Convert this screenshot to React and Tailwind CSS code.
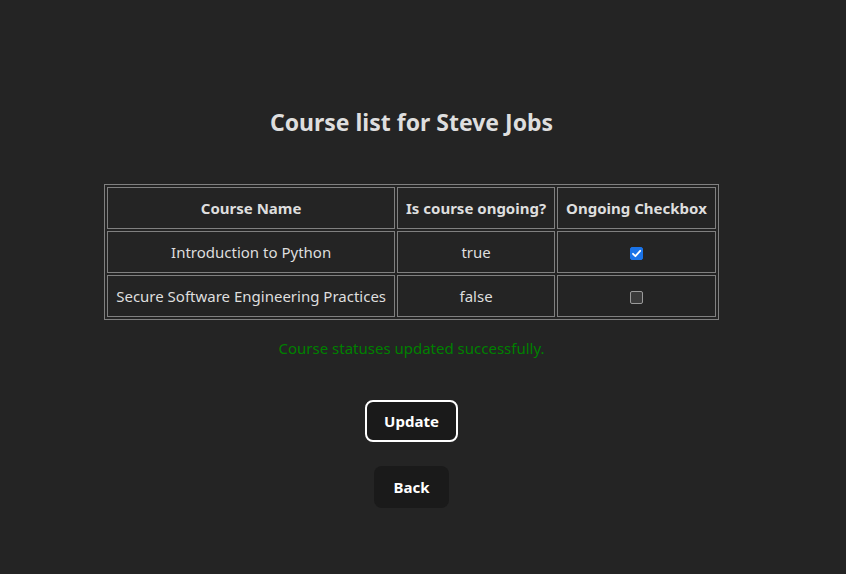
function Checkbox({ checked }) {
  return (
    <label className="relative inline-flex align-middle">
      <input
        type="checkbox"
        defaultChecked={checked}
        className="peer appearance-none w-[13px] h-[13px] rounded-[2px] border border-[#9a9a9a] bg-[#3b3b3b] checked:border-[#1a73e8] checked:bg-[#1a73e8]"
      />
      <svg
        viewBox="0 0 13 13"
        className="pointer-events-none absolute inset-0 w-[13px] h-[13px] hidden peer-checked:block"
      >
        <path d="M3 6.8 L5.4 9.2 L10.2 3.8" fill="none" stroke="#fff" strokeWidth="1.8" strokeLinecap="round" strokeLinejoin="round" />
      </svg>
    </label>
  );
}

export default function App() {
  const courses = [
    { name: "Introduction to Python", ongoing: true },
    { name: "Secure Software Engineering Practices", ongoing: false },
  ];

  return (
    <div className="min-h-[574px] bg-[#242424] text-[#dedede] font-['Noto_Sans',sans-serif] [color-scheme:dark] pr-[23px]">
      <div className="flex flex-col items-center pt-[107px]">
        <h2 className="text-[23px] font-bold leading-[30px]">Course list for Steve Jobs</h2>

        <table className="mt-[47px] border-separate border-spacing-[2px] border border-[#808080] text-[15px] leading-[20px]">
          <thead>
            <tr>
              <th className="border border-[#808080] px-2 py-[10px] font-bold">Course Name</th>
              <th className="border border-[#808080] px-2 py-[10px] font-bold">Is course ongoing?</th>
              <th className="border border-[#808080] px-2 py-[10px] font-bold">Ongoing Checkbox</th>
            </tr>
          </thead>
          <tbody>
            {courses.map((c) => (
              <tr key={c.name}>
                <td className="border border-[#808080] px-2 py-[10px] text-center">{c.name}</td>
                <td className="border border-[#808080] px-2 py-[10px] text-center">{String(c.ongoing)}</td>
                <td className="border border-[#808080] px-2 py-[10px] text-center">
                  <Checkbox checked={c.ongoing} />
                </td>
              </tr>
            ))}
          </tbody>
        </table>

        <p className="mt-[18px] text-[15px] leading-[20px] text-[#008000]">Course statuses updated successfully.</p>

        <button className="mt-[42px] h-[42px] px-[17px] rounded-lg border-2 border-white bg-[#1a1a1a] text-[15px] font-bold text-white">
          Update
        </button>

        <button className="mt-[24px] h-[42px] px-[17px] rounded-lg border-2 border-transparent bg-[#1a1a1a] text-[15px] font-bold text-white">
          Back
        </button>
      </div>
    </div>
  );
}
